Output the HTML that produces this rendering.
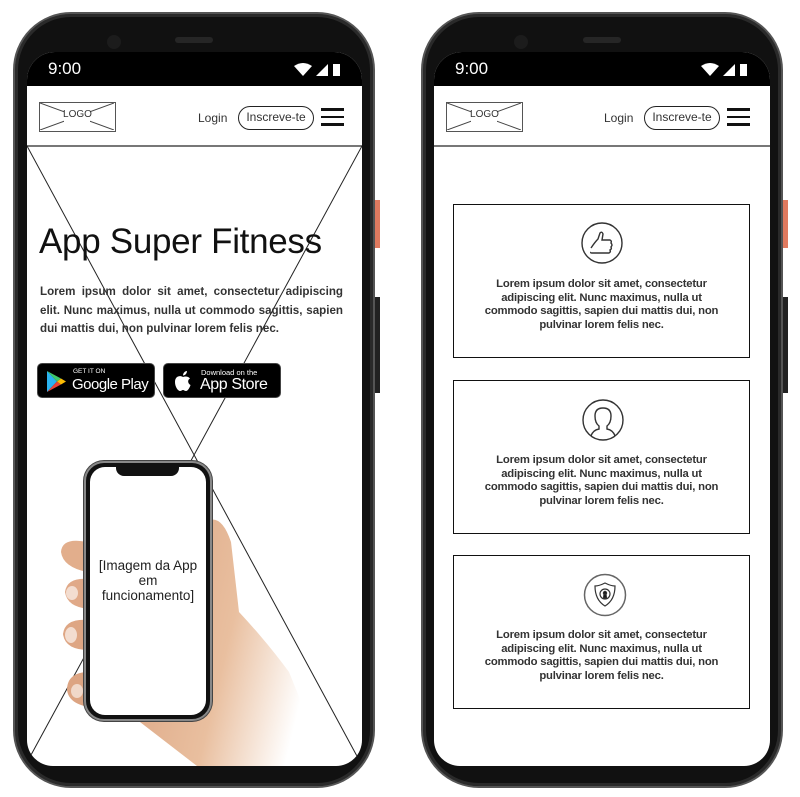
<!DOCTYPE html>
<html><head><meta charset="utf-8">
<style>
*{margin:0;padding:0;box-sizing:border-box}
body{width:800px;height:797px;background:#fff;position:relative;overflow:hidden;font-family:"Liberation Sans",sans-serif}
.abs{position:absolute}
.body{position:absolute;top:12px;width:362px;height:776px;border-radius:58px;background:#111;border:2px solid #555;box-shadow:inset 0 0 0 3px #2a2a2a}
.screen{position:absolute;top:52px;height:714px;background:#fff;border-radius:28px 28px 26px 26px;overflow:hidden}
.status{position:absolute;left:0;top:0;right:0;height:34px;background:#000;color:#fff;font-size:17px}
.hdr{position:absolute;left:0;right:0;top:34px;height:61px;border-bottom:2px solid #777;background:#fff}
.logo{position:absolute;left:12px;top:16px;width:77px;height:30px;border:1.5px solid #555}
.logo span{position:absolute;left:0;right:0;top:6px;text-align:center;font-size:10px;color:#333}
.login{position:absolute;top:25px;font-size:12px;color:#333}
.btn{position:absolute;top:20px;width:76px;height:24px;border:1.3px solid #222;border-radius:12px;font-size:12px;color:#333;text-align:center;line-height:21px}
.ham{position:absolute;top:22px;width:23px;height:18px}
.ham i{display:block;height:2.5px;background:#111;margin-bottom:5px}
.card{position:absolute;left:19px;width:297px;height:154px;border:1.3px solid #111}
.card p{position:absolute;left:26px;right:26px;top:73px;text-align:center;font-weight:bold;font-size:11.3px;line-height:13.5px;color:#333;letter-spacing:-0.2px}
</style></head><body>

<div class="abs" style="left:373px;top:200px;width:7px;height:48px;background:#e07a5f"></div>
<div class="abs" style="left:373px;top:297px;width:7px;height:96px;background:#222"></div>
<div class="abs" style="left:781px;top:200px;width:7px;height:48px;background:#e07a5f"></div>
<div class="abs" style="left:781px;top:297px;width:7px;height:96px;background:#222"></div>

<!-- PHONE 1 -->
<div class="body" style="left:13px"></div>
<div class="abs" style="left:107px;top:35px;width:14px;height:14px;border-radius:50%;background:#1c1c1c"></div>
<div class="abs" style="left:175px;top:37px;width:38px;height:6px;border-radius:3px;background:#262626"></div>
<div class="screen" style="left:27px;width:335px">
  <div class="status"><span class="abs" style="left:21px;top:7px">9:00</span>
    <svg class="abs" style="left:267px;top:11px" width="56" height="16"><path d="M0 3 Q9 -3 18 3 L9 13Z" fill="#fff"/><path d="M22 13 L34 1 L34 13Z" fill="#fff"/><rect x="39" y="1" width="7" height="12" fill="#fff"/></svg>
  </div>
  <div class="hdr">
    <div class="logo"><svg width="74" height="27" class="abs" style="left:0;top:0"><path d="M0 0L74 27M74 0L0 27" stroke="#444" stroke-width="1"/><rect x="24" y="7" width="26" height="12" fill="#fff"/></svg><span>LOGO</span></div>
    <div class="login" style="left:171px">Login</div>
    <div class="btn" style="left:211px">Inscreve-te</div>
    <div class="ham" style="left:294px"><i></i><i></i><i></i></div>
  </div>
  <svg class="abs" style="left:0;top:0" width="335" height="714">
    <line x1="0" y1="94" x2="331" y2="706" stroke="#222" stroke-width="1"/>
    <line x1="335" y1="94" x2="4" y2="703" stroke="#222" stroke-width="1"/>
  </svg>
  <div class="abs" style="left:12px;top:170px;font-size:35px;color:#111;letter-spacing:-0.3px">App Super Fitness</div>
  <div class="abs" style="left:13px;top:231px;width:303px;font-size:11.6px;font-weight:bold;line-height:18.5px;color:#333;text-align:justify;text-align-last:left">Lorem ipsum dolor sit amet, consectetur adipiscing elit. Nunc maximus, nulla ut commodo sagittis, sapien dui mattis dui, non pulvinar lorem felis nec.</div>
  <div class="abs" style="left:10px;top:311px;width:118px;height:35px;background:#000;border-radius:5px;border:1px solid #444">
    <svg class="abs" style="left:8px;top:6px" width="20" height="23"><path d="M1 1L11 11.5L1 22Z" fill="#2bb3f0"/><path d="M1 1L15 8.5L11 11.5Z" fill="#3fc96b"/><path d="M1 22L15 14.5L11 11.5Z" fill="#ea4335"/><path d="M15 8.5L20 11.5L15 14.5L11 11.5Z" fill="#fbbc05"/></svg>
    <div class="abs" style="left:35px;top:4px;font-size:6.5px;color:#fff">GET IT ON</div>
    <div class="abs" style="left:34px;top:12px;font-size:15px;color:#fff;letter-spacing:-0.5px">Google Play</div>
  </div>
  <div class="abs" style="left:136px;top:311px;width:118px;height:35px;background:#000;border-radius:5px;border:1px solid #444">
    <svg class="abs" style="left:9px;top:5px" width="20" height="24"><path d="M10 8C7 6 2 7 2 13C2 18 5 22 7 22C8.5 22 9 21 10 21C11 21 11.5 22 13 22C15 22 17 18 17.5 16C15 15 14 11 17 9.5C15.5 7.5 12.5 7 10 8Z" fill="#fff"/><path d="M10 6.5C10 4 12 2 14 2C14 4.5 12 6.5 10 6.5Z" fill="#fff"/></svg>
    <div class="abs" style="left:37px;top:4px;font-size:7.5px;color:#fff">Download on the</div>
    <div class="abs" style="left:36px;top:12px;font-size:16px;color:#fff;letter-spacing:-0.4px">App Store</div>
  </div>
  <svg class="abs" style="left:0;top:0" width="335" height="714">
    <defs><linearGradient id="sk" x1="0" y1="0" x2="1" y2="0.3"><stop offset="0" stop-color="#d9a07e"/><stop offset="0.6" stop-color="#e9bf9f"/><stop offset="1" stop-color="#fff"/></linearGradient></defs>
    <path d="M178 470 Q194 460 204 490 L212 560 Q240 590 262 620 L300 714 L170 714 L100 660 L170 640 Z" fill="url(#sk)"/>
    <path d="M60 490 Q35 485 34 500 Q36 515 60 520 L70 520 L70 490Z" fill="#e2ae8c"/>
    <path d="M62 527 Q40 525 38 540 Q40 555 62 557 L70 557 L70 527Z" fill="#e0a988"/>
    <path d="M62 568 Q38 566 36 582 Q38 598 62 598 L70 598 L70 568Z" fill="#dea684"/>
    <path d="M68 620 Q40 618 40 638 Q42 654 70 656 L80 656 L80 620Z" fill="#dca482"/>
    <ellipse cx="44" cy="583" rx="6" ry="8" fill="#f3ddd0"/>
    <ellipse cx="45" cy="541" rx="6" ry="7" fill="#f3ddd0"/>
    <ellipse cx="50" cy="639" rx="6" ry="7" fill="#f0d8c9"/>
  </svg>
  <div class="abs" style="left:57px;top:409px;width:128px;height:260px;border-radius:20px;background:#111;border:2px solid #888;box-shadow:0 0 0 1px #444"></div>
  <div class="abs" style="left:63px;top:415px;width:116px;height:248px;border-radius:15px;background:#fff"></div>
  <div class="abs" style="left:89px;top:415px;width:63px;height:9px;border-radius:0 0 8px 8px;background:#111"></div>
  <div class="abs" style="left:66px;top:506px;width:110px;text-align:center;font-size:13.5px;line-height:15px;color:#222">[Imagem da App<br>em<br>funcionamento]</div>
</div>

<!-- PHONE 2 -->
<div class="body" style="left:421px"></div>
<div class="abs" style="left:514px;top:35px;width:14px;height:14px;border-radius:50%;background:#1c1c1c"></div>
<div class="abs" style="left:583px;top:37px;width:38px;height:6px;border-radius:3px;background:#262626"></div>
<div class="screen" style="left:434px;width:336px">
  <div class="status"><span class="abs" style="left:21px;top:7px">9:00</span>
    <svg class="abs" style="left:267px;top:11px" width="56" height="16"><path d="M0 3 Q9 -3 18 3 L9 13Z" fill="#fff"/><path d="M22 13 L34 1 L34 13Z" fill="#fff"/><rect x="39" y="1" width="7" height="12" fill="#fff"/></svg>
  </div>
  <div class="hdr">
    <div class="logo"><svg width="74" height="27" class="abs" style="left:0;top:0"><path d="M0 0L74 27M74 0L0 27" stroke="#444" stroke-width="1"/><rect x="24" y="7" width="26" height="12" fill="#fff"/></svg><span>LOGO</span></div>
    <div class="login" style="left:170px">Login</div>
    <div class="btn" style="left:210px">Inscreve-te</div>
    <div class="ham" style="left:293px"><i></i><i></i><i></i></div>
  </div>
  <div class="card" style="top:152px">
    <svg class="abs" style="left:127px;top:17px" width="42" height="42" fill="none" stroke="#333" stroke-width="1.4"><circle cx="21" cy="21" r="20"/><path d="M10 26Q14 20 17 17L19 11Q21 9 22 12L21 18L29 18Q31 19 30 21Q32 23 30 25Q31 27 29 28Q30 30 28 31L11 31Q9 31 10 30"/></svg>
    <p>Lorem ipsum dolor sit amet, consectetur adipiscing elit. Nunc maximus, nulla ut commodo sagittis, sapien dui mattis dui, non pulvinar lorem felis nec.</p>
  </div>
  <div class="card" style="top:328px">
    <svg class="abs" style="left:128px;top:18px" width="42" height="42" fill="none" stroke="#333" stroke-width="1.4"><circle cx="21" cy="21" r="20"/><path d="M9 37Q11 31 17 30L17 27Q13 24 13 17Q13 9 21 9Q29 9 29 17Q29 24 25 27L25 30Q31 31 33 37"/></svg>
    <p>Lorem ipsum dolor sit amet, consectetur adipiscing elit. Nunc maximus, nulla ut commodo sagittis, sapien dui mattis dui, non pulvinar lorem felis nec.</p>
  </div>
  <div class="card" style="top:503px">
    <svg class="abs" style="left:129px;top:17px" width="44" height="44" fill="none" stroke="#333" stroke-width="1.2"><circle cx="22" cy="22" r="20.5" stroke="#666" stroke-width="1.5"/><path d="M22 10Q16 13 12 13Q12 27 22 33Q32 27 32 13Q28 13 22 10Z"/><circle cx="22" cy="21" r="5"/><circle cx="22" cy="20" r="1.6" fill="#111"/><path d="M21 21L20.5 25L23.5 25L23 21Z" fill="#111"/></svg>
    <p>Lorem ipsum dolor sit amet, consectetur adipiscing elit. Nunc maximus, nulla ut commodo sagittis, sapien dui mattis dui, non pulvinar lorem felis nec.</p>
  </div>
</div>
</body></html>
